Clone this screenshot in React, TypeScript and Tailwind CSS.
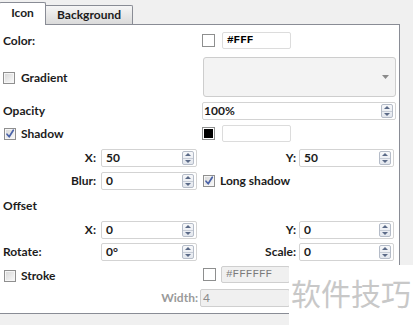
import React from "react";

function Check({ checked }: { checked?: boolean }) {
  return (
    <div className="w-[12px] h-[12px] border border-[#8f8f8f] bg-linear-to-br from-[#d6d6d6] to-[#fbfbfb] shadow-[inset_0_0_0_1px_#f6f6f6] flex items-center justify-center shrink-0">
      {checked && (
        <svg width="10" height="10" viewBox="0 0 10 10">
          <path d="M2 5.2 L4.2 7.8 L8.3 1.2" stroke="#4b63a8" strokeWidth="1.7" fill="none" strokeLinecap="round" strokeLinejoin="round" />
        </svg>
      )}
    </div>
  );
}

function Swatch({ color }: { color: string }) {
  return (
    <div className="w-[13px] h-[13px] border border-[#8e8f8f] bg-white p-[1px] shrink-0">
      <div className="w-full h-full" style={{ background: color }} />
    </div>
  );
}

function Spinner() {
  return (
    <div className="w-[12px] h-[14px] border border-[#b5bcc8] rounded-[2px] bg-linear-to-b from-[#f7f8fa] to-[#e3e7ee] flex flex-col shrink-0">
      <div className="flex-1 flex items-center justify-center border-b border-[#c6ccd6]">
        <svg width="6" height="3" viewBox="0 0 6 3"><path d="M0 3 L3 0 L6 3 Z" fill="#5b6a87" /></svg>
      </div>
      <div className="flex-1 flex items-center justify-center">
        <svg width="6" height="3" viewBox="0 0 6 3"><path d="M0 0 L3 3 L6 0 Z" fill="#5b6a87" /></svg>
      </div>
    </div>
  );
}

function Num({ value, w, pl = "pl-[4px]" }: { value: string; w: string; pl?: string }) {
  return (
    <div className={`${w} h-[18px] border border-[#d3d3d3] rounded-[2px] bg-white flex items-center pr-[2px] shrink-0`}>
      <div className={`flex-1 ${pl} text-[12px] leading-none text-[#1a1a1a]`}>{value}</div>
      <Spinner />
    </div>
  );
}

function HexInput({ value, disabled }: { value: string; disabled?: boolean }) {
  return (
    <div
      className={`w-[69px] h-[17px] border rounded-[2px] flex items-center pl-[4px] font-['Liberation_Mono',monospace] text-[11px] leading-none ${
        disabled ? "bg-[#f0f0f0] border-[#cfcfcf] text-[#7a7a7a] font-normal" : "bg-white border-[#dcdcdc] text-black font-bold"
      }`}
    >
      {value}
    </div>
  );
}

export default function App() {
  return (
    <div className="w-[413px] h-[325px] bg-[#f0f0f0] relative overflow-hidden font-['Lato',sans-serif] font-bold text-[12px] text-[#1c1c1c]">
      {/* tabs */}
      <div className="h-[24px] flex items-end">
        <div className="w-[47px] h-[23px] bg-white border border-b-0 border-[#898c95] rounded-t-[2px] flex items-center justify-center relative top-[1px] z-10 -ml-[1px] pb-[2px]">
          Icon
        </div>
        <div className="w-[87px] h-[19px] bg-linear-to-b from-[#f6f6f6] to-[#dadada] border border-b-0 border-[#898c95] border-l-0 rounded-tr-[2px] flex items-center justify-center">
          Background
        </div>
      </div>
      {/* panel */}
      <div className="w-[400px] h-[290px] bg-white border-t border-r border-b border-[#898c95] flex flex-col">
        {/* Color */}
        <div className="mt-[7px] h-[17px] flex items-center">
          <div className="w-[202px] pl-[3px]">Color:</div>
          <Swatch color="#ffffff" />
          <div className="ml-[7px]"><HexInput value="#FFF" /></div>
        </div>
        {/* Gradient */}
        <div className="mt-[8px] h-[40px] flex items-center">
          <div className="w-[203px] pl-[3px] pt-[2px] flex items-center gap-[6px]">
            <Check />
            <span>Gradient</span>
          </div>
          <div className="w-[193px] h-[40px] bg-[#f3f3f3] border border-[#cdcdcd] rounded-[3px] flex items-center justify-end pr-[6px]">
            <svg width="7" height="4" viewBox="0 0 7 4"><path d="M0 0 L7 0 L3.5 4 Z" fill="#8a8a8a" /></svg>
          </div>
        </div>
        {/* Opacity */}
        <div className="mt-[5px] h-[18px] flex items-center">
          <div className="w-[202px] pl-[3px]">Opacity</div>
          <Num value="100%" w="w-[194px]" pl="pl-[1px]" />
        </div>
        {/* Shadow */}
        <div className="mt-[5px] h-[17px] flex items-center">
          <div className="w-[202px] pl-[4px] flex items-center gap-[5px]">
            <Check checked />
            <span>Shadow</span>
          </div>
          <Swatch color="#000000" />
          <div className="ml-[7px]"><HexInput value="" /></div>
        </div>
        {/* X / Y */}
        <div className="mt-[7px] h-[18px] flex items-center">
          <div className="w-[99px] text-right pr-[3px]">X:</div>
          <div className="ml-[2px]"><Num value="50" w="w-[96px]" /></div>
          <div className="w-[102px] text-right pr-[3px]">Y:</div>
          <Num value="50" w="w-[95px]" />
        </div>
        {/* Blur */}
        <div className="mt-[5px] h-[18px] flex items-center">
          <div className="w-[99px] text-right pr-[3px]">Blur:</div>
          <div className="ml-[2px]"><Num value="0" w="w-[96px]" /></div>
          <div className="ml-[6px] flex items-center gap-[5px]">
            <Check checked />
            <span>Long shadow</span>
          </div>
        </div>
        {/* Offset */}
        <div className="mt-[7px] h-[18px] flex items-center pl-[3px]">Offset</div>
        {/* X / Y */}
        <div className="mt-[6px] h-[18px] flex items-center">
          <div className="w-[99px] text-right pr-[3px]">X:</div>
          <div className="ml-[2px]"><Num value="0" w="w-[96px]" /></div>
          <div className="w-[102px] text-right pr-[3px]">Y:</div>
          <Num value="0" w="w-[95px]" />
        </div>
        {/* Rotate / Scale */}
        <div className="mt-[4px] h-[18px] flex items-center">
          <div className="w-[99px] pl-[3px]">Rotate:</div>
          <div className="ml-[2px]"><Num value="0°" w="w-[96px]" /></div>
          <div className="w-[102px] text-right pr-[3px]">Scale:</div>
          <Num value="0" w="w-[95px]" />
        </div>
        {/* Stroke */}
        <div className="mt-[5px] h-[17px] flex items-center">
          <div className="w-[203px] pl-[4px] pt-[2px] flex items-center gap-[5px]">
            <Check />
            <span>Stroke</span>
          </div>
          <Swatch color="#ffffff" />
          <div className="ml-[5px]"><HexInput value="#FFFFFF" disabled /></div>
        </div>
        {/* Width */}
        <div className="mt-[6px] h-[18px] flex items-center">
          <div className="w-[200px] text-right pr-[2px] text-[#9a9a9a]">Width:</div>
          <div className="w-[90px] h-[18px] border border-[#cfcfcf] rounded-[2px] bg-[#f0f0f0] flex items-center pl-[2px] text-[#8a8a8a] font-normal">4</div>
        </div>
      </div>
      {/* watermark overlay */}
      <div className="absolute left-[289px] top-[265px] w-[124px] h-[60px] bg-white flex items-center justify-center">
        <span className="font-['Noto_Sans_CJK_SC',sans-serif] font-normal text-[30px] leading-none text-[#c8c8c8] -mt-[6px]">软件技巧</span>
      </div>
    </div>
  );
}
